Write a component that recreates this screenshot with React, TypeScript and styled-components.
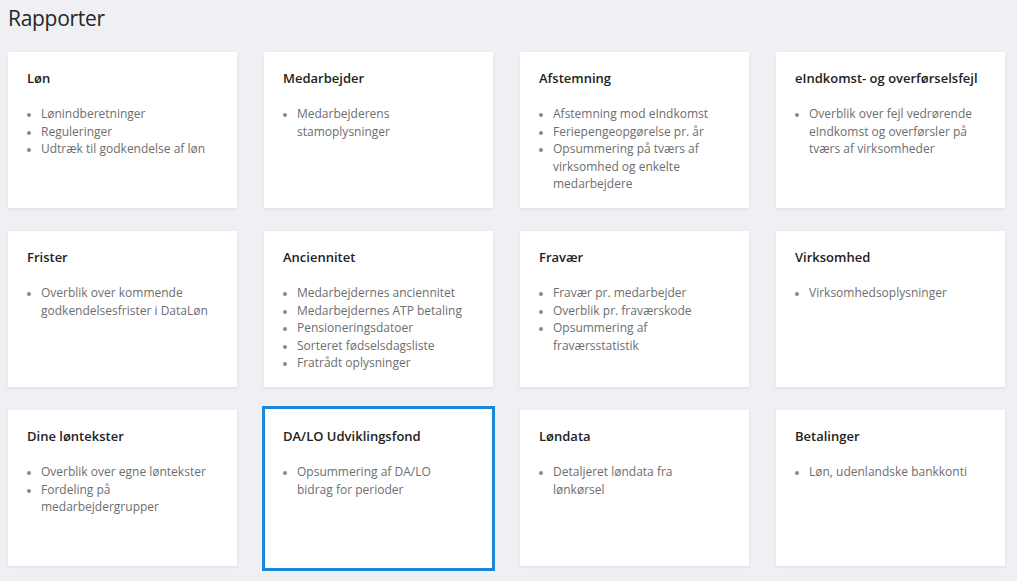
import React from 'react';
import styled, { createGlobalStyle } from 'styled-components';

const GlobalStyle = createGlobalStyle`
  html, body {
    margin: 0;
    padding: 0;
    background-color: #eef0f4;
    font-family: 'Open Sans', 'Liberation Sans', sans-serif;
  }
`;

const Page = styled.div`
  width: 1017px;
  height: 581px;
  padding: 0 8px;
  box-sizing: border-box;
  overflow: hidden;
`;

const Title = styled.h1`
  margin: 0;
  padding-top: 4px;
  height: 52px;
  box-sizing: border-box;
  font-size: 21px;
  font-weight: 400;
  color: #262626;
  letter-spacing: -0.3px;
`;

const Grid = styled.div`
  display: grid;
  grid-template-columns: repeat(4, 229px);
  grid-auto-rows: 156px;
  column-gap: 27px;
  row-gap: 23px;
`;

const Card = styled.div<{ $active?: boolean }>`
  background: #ffffff;
  box-shadow: 0 1px 3px rgba(0, 0, 0, 0.08);
  padding: 17px 26px 0 19px;
  box-sizing: border-box;
  ${(p) => (p.$active ? 'outline: 3px solid #1a88d9; outline-offset: -1px; height: 161px; margin-top: -2px; padding-top: 19px;' : '')}
`;

const CardTitle = styled.h2`
  margin: 0 0 18px 0;
  font-size: 13px;
  font-weight: 600;
  color: #222222;
  line-height: 18px;
`;

const List = styled.ul`
  margin: 0;
  padding-left: 14px;
  color: #6e6e6e;
  font-size: 12px;
  line-height: 17.6px;
  li::marker {
    color: #8a8a8a;
    font-size: 10px;
  }
`;

const reports = [
  { title: 'Løn', items: ['Lønindberetninger', 'Reguleringer', 'Udtræk til godkendelse af løn'] },
  { title: 'Medarbejder', items: ['Medarbejderens stamoplysninger'] },
  {
    title: 'Afstemning',
    items: [
      'Afstemning mod eIndkomst',
      'Feriepengeopgørelse pr. år',
      'Opsummering på tværs af virksomhed og enkelte medarbejdere',
    ],
  },
  {
    title: 'eIndkomst- og overførselsfejl',
    items: ['Overblik over fejl vedrørende eIndkomst og overførsler på tværs af virksomheder'],
  },
  { title: 'Frister', items: ['Overblik over kommende godkendelsesfrister i DataLøn'] },
  {
    title: 'Anciennitet',
    items: [
      'Medarbejdernes anciennitet',
      'Medarbejdernes ATP betaling',
      'Pensioneringsdatoer',
      'Sorteret fødselsdagsliste',
      'Fratrådt oplysninger',
    ],
  },
  {
    title: 'Fravær',
    items: ['Fravær pr. medarbejder', 'Overblik pr. fraværskode', 'Opsummering af fraværsstatistik'],
  },
  { title: 'Virksomhed', items: ['Virksomhedsoplysninger'] },
  {
    title: 'Dine løntekster',
    items: ['Overblik over egne løntekster', 'Fordeling på medarbejdergrupper'],
  },
  { title: 'DA/LO Udviklingsfond', items: ['Opsummering af DA/LO bidrag for perioder'], active: true },
  { title: 'Løndata', items: ['Detaljeret løndata fra lønkørsel'] },
  { title: 'Betalinger', items: ['Løn, udenlandske bankkonti'] },
];

const App = () => {
  return (
    <Page>
      <GlobalStyle />
      <Title>Rapporter</Title>
      <Grid>
        {reports.map((r) => (
          <Card key={r.title} $active={r.active}>
            <CardTitle>{r.title}</CardTitle>
            <List>
              {r.items.map((item) => (
                <li key={item}>{item}</li>
              ))}
            </List>
          </Card>
        ))}
      </Grid>
    </Page>
  );
};

export default App;
